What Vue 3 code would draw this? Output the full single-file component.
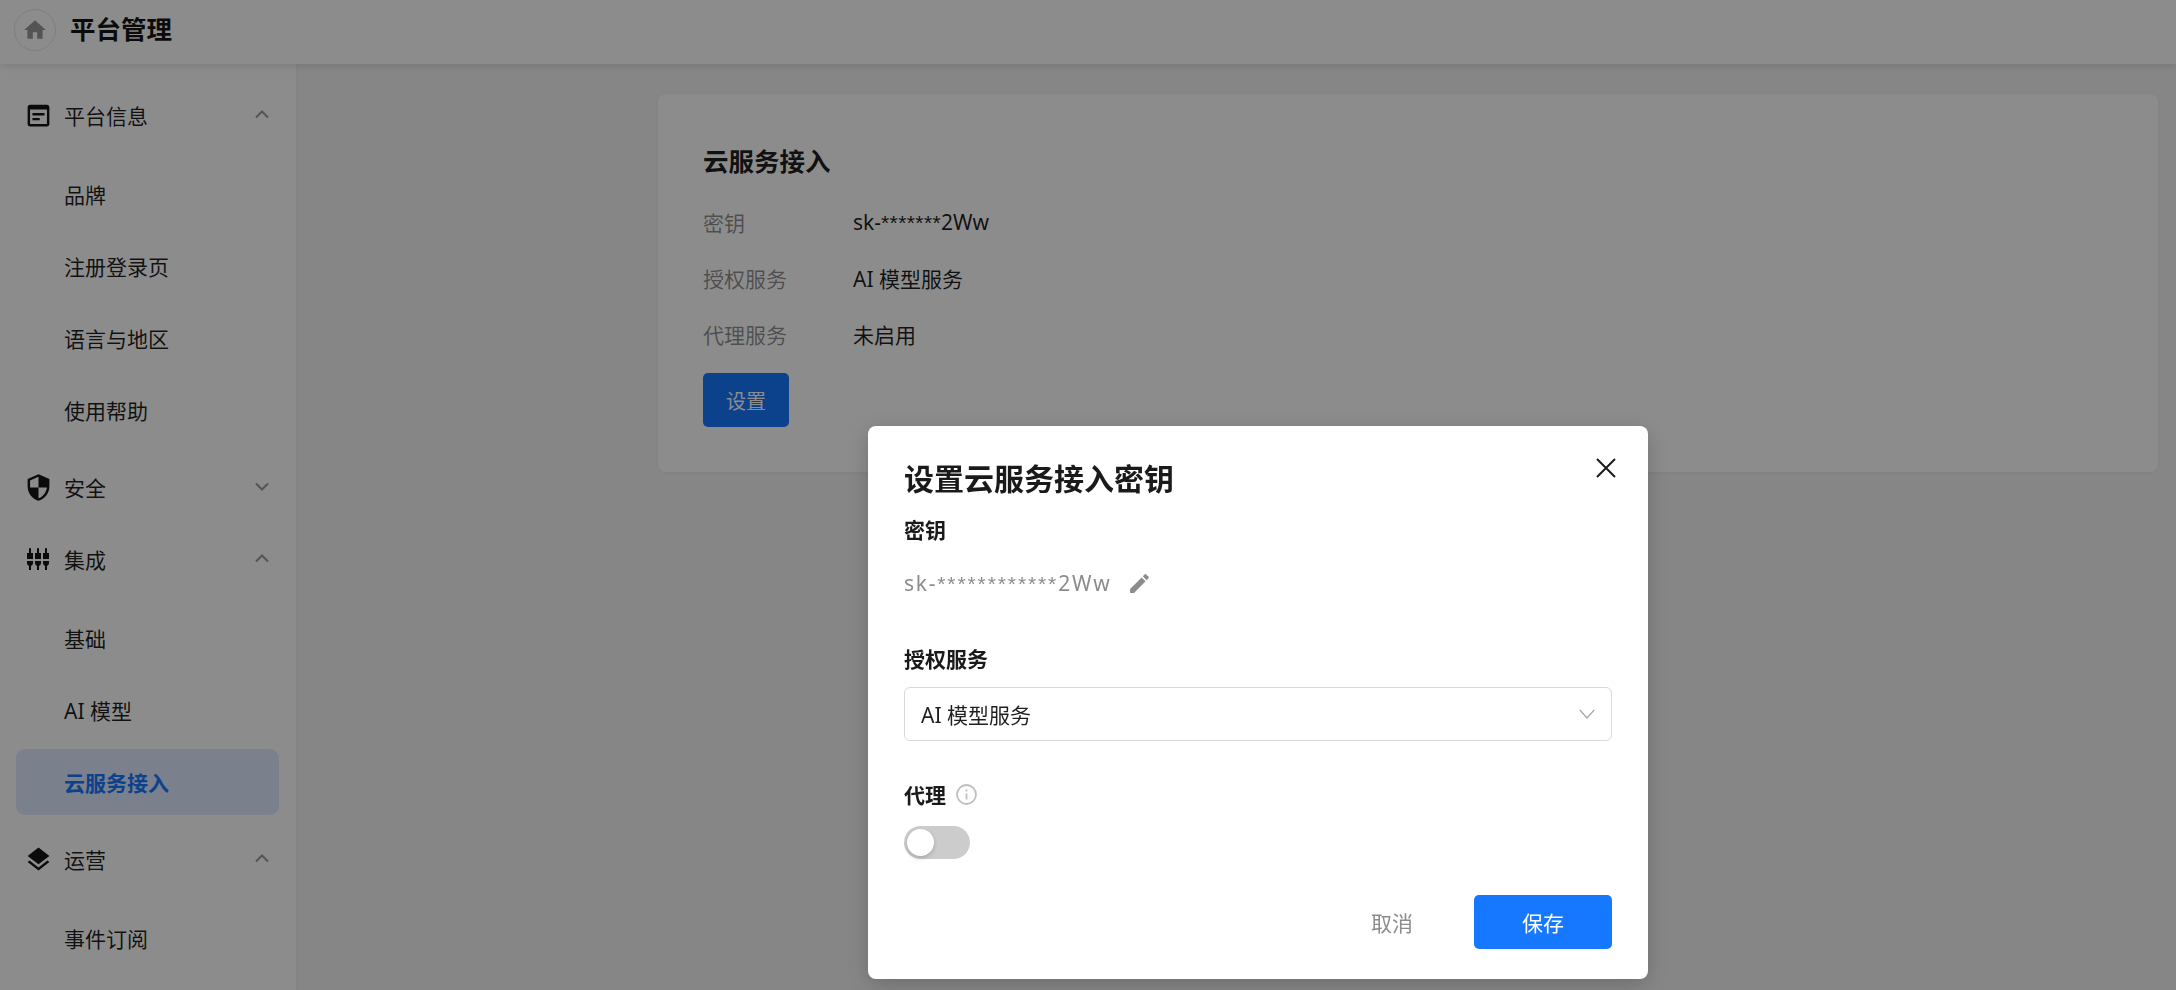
<script setup>
import { ref } from 'vue';

// Material glyphs used in the sidebar and dialog
const icons = {
  info: { size: 29, d: 'M19 3H5c-1.1 0-2 .9-2 2v14c0 1.1.9 2 2 2h14c1.1 0 2-.9 2-2V5c0-1.1-.9-2-2-2zm0 16H5V7h14v12zm-2-7H7v-2h10v2zm-4 4H7v-2h6v2z' },
  shield: { size: 29, d: 'M12 1 3 5v6c0 5.55 3.84 10.74 9 12 5.16-1.26 9-6.45 9-12V5l-9-4zm0 10.99h7c-.53 4.12-3.28 7.79-7 8.94V12H5V6.3l7-3.11v8.8z' },
  plugs: { size: 24, d: 'M5 2c0-.55-.45-1-1-1s-1 .45-1 1v4H1v6h6V6H5V2zm4 14c0 1.3.84 2.4 2 2.82V23h2v-4.18c1.16-.41 2-1.51 2-2.82v-2H9v2zm-8 0c0 1.3.84 2.4 2 2.82V23h2v-4.18C6.16 18.4 7 17.3 7 16v-2H1v2zM21 6V2c0-.55-.45-1-1-1s-1 .45-1 1v4h-2v6h6V6h-2zm-8-4c0-.55-.45-1-1-1s-1 .45-1 1v4H9v6h6V6h-2V2zm4 14c0 1.3.84 2.4 2 2.82V23h2v-4.18c1.16-.41 2-1.51 2-2.82v-2h-6v2z' },
  layers: { size: 29, d: 'M11.99 18.54l-7.37-5.73L3 14.07l9 7 9-7-1.63-1.27-7.38 5.74zM12 16l7.36-5.73L21 9l-9-7-9 7 1.63 1.27L12 16z' }
};

const menu = [
  { title: '平台信息', icon: 'info', open: true, items: ['品牌', '注册登录页', '语言与地区', '使用帮助'] },
  { title: '安全', icon: 'shield', open: false, items: [] },
  { title: '集成', icon: 'plugs', open: true, items: ['基础', 'AI 模型', '云服务接入'] },
  { title: '运营', icon: 'layers', open: true, items: ['事件订阅'] }
];

const activeItem = '云服务接入';

const dialogOpen = ref(true);
const proxyOn = ref(false);
</script>

<template>
  <div class="page">
    <header class="topbar">
      <span class="home">
        <svg viewBox="0 0 24 24" width="26" height="26"><path d="M10 20v-6h4v6h5v-8h3L12 3 2 12h3v8z" /></svg>
      </span>
      <span class="brand">平台管理</span>
    </header>

    <div class="body">
      <aside class="sidebar">
        <div v-for="group in menu" :key="group.title" class="group">
          <div class="row group-title">
            <span class="icon-box">
              <svg viewBox="0 0 24 24" :width="icons[group.icon].size" :height="icons[group.icon].size">
                <path :d="icons[group.icon].d" />
              </svg>
            </span>
            <span class="grow">{{ group.title }}</span>
            <svg class="arrow" :class="{ up: group.open }" viewBox="0 0 14 9" width="14" height="9">
              <path d="M1 1.5l6 6 6-6" />
            </svg>
          </div>
          <div v-if="group.items.length" class="sub">
            <div
              v-for="item in group.items"
              :key="item"
              class="row sub-item"
              :class="{ active: item === activeItem }"
            >{{ item }}</div>
          </div>
        </div>
      </aside>

      <main class="main">
        <section class="card">
          <h2 class="card-title">云服务接入</h2>
          <div class="line">
            <span class="line-label">密钥</span>
            <span>sk-<span class="stars">*******</span>2Ww</span>
          </div>
          <div class="line">
            <span class="line-label">授权服务</span>
            <span>AI 模型服务</span>
          </div>
          <div class="line">
            <span class="line-label">代理服务</span>
            <span>未启用</span>
          </div>
          <button class="btn primary small" type="button">设置</button>
        </section>
      </main>
    </div>

    <!-- Dialog layer -->
    <div v-if="dialogOpen" class="mask">
      <div class="dialog">
        <button class="close" type="button" @click="dialogOpen = false">
          <svg viewBox="0 0 20 20" width="20" height="20"><path d="M1 1l18 18M19 1L1 19" /></svg>
        </button>
        <h3 class="dialog-title">设置云服务接入密钥</h3>

        <div class="label key-label">密钥</div>
        <div class="key-value">
          <span>sk-<span class="stars">************</span>2Ww</span>
          <svg viewBox="0 0 24 24" width="25" height="25">
            <path d="M3 17.25V21h3.75L17.81 9.94l-3.75-3.75L3 17.25zM20.71 7.04c.39-.39.39-1.02 0-1.41l-2.34-2.34c-.39-.39-1.02-.39-1.41 0l-1.83 1.83 3.75 3.75 1.83-1.83z" />
          </svg>
        </div>

        <div class="label service-label">授权服务</div>
        <div class="select">
          <span>AI 模型服务</span>
          <svg viewBox="0 0 16 10" width="16" height="10"><path d="M.7.9L8 8.9 15.3.9" /></svg>
        </div>

        <div class="label proxy-label">
          代理
          <svg viewBox="0 0 21 21" width="21" height="21">
            <circle cx="10.5" cy="10.5" r="9.5" />
            <path d="M10.5 9.5v6M10.5 5.6v2" />
          </svg>
        </div>
        <button class="switch" :class="{ on: proxyOn }" type="button" @click="proxyOn = !proxyOn">
          <span class="knob"></span>
        </button>

        <div class="actions">
          <button class="btn plain" type="button" @click="dialogOpen = false">取消</button>
          <button class="btn primary" type="button">保存</button>
        </div>
      </div>
    </div>
  </div>
</template>

<style>
html, body { margin: 0; overflow: hidden; background: #fff; }
</style>

<style scoped>
.page {
  height: 990px;
  display: flex;
  flex-direction: column;
  overflow: hidden;
  font-family: "Noto Sans", "Noto Sans CJK SC", sans-serif;
  font-size: 21px;
  color: rgba(0, 0, 0, 0.88);
}

.topbar {
  height: 64px;
  flex: none;
  display: flex;
  align-items: center;
  padding-left: 14px;
  background: #fff;
  box-shadow: 0 2px 8px rgba(0, 0, 0, 0.12);
  position: relative;
  z-index: 1;
}
.home {
  width: 42px;
  height: 42px;
  margin-top: -4px;
  border: 1px solid #e7e7e7;
  border-radius: 50%;
  display: flex;
  align-items: center;
  justify-content: center;
  box-sizing: border-box;
}
.home svg { fill: #999; }
.brand {
  margin-left: 14px;
  margin-top: -10px;
  font-size: 25.5px;
  font-weight: 700;
  color: #141414;
}

.body { flex: 1; display: flex; min-height: 0; }

.sidebar {
  width: 298px;
  flex: none;
  box-sizing: border-box;
  padding: 18px 17px 0 16px;
  background: #fff;
  border-right: 2px solid #f0f0f0;
}
.group { margin-bottom: 6px; }
.row {
  height: 66px;
  display: flex;
  align-items: center;
  border-radius: 9px;
}
.group-title { padding-left: 11px; }
.icon-box {
  width: 22px;
  height: 22px;
  margin-right: 15px;
  flex: none;
  display: flex;
  align-items: center;
  justify-content: center;
}
.icon-box svg { flex: none; fill: #141414; }
.grow { flex: 1; }
.arrow {
  margin-right: 10px;
  margin-top: -2px;
  fill: none;
  stroke: #999;
  stroke-width: 2;
}
.arrow.up { transform: rotate(180deg); }
.sub {
  display: flex;
  flex-direction: column;
  gap: 6px;
  padding: 13px 0 5px;
}
.sub-item { padding-left: 48px; }
.sub-item.active {
  background: #deeaff;
  color: #1677ff;
  font-weight: 700;
}

.main {
  flex: 1;
  min-width: 0;
  background: #f5f5f5;
  padding: 30px 18px 0 360px;
}
.card {
  height: 378px;
  box-sizing: border-box;
  padding: 49px 45px 0;
  background: #fff;
  border-radius: 8px;
  box-shadow: 0 1px 4px rgba(0, 0, 0, 0.06);
}
.card-title {
  margin: 0 0 15px;
  font-size: 25.5px;
  font-weight: 700;
  line-height: 36px;
}
.line {
  height: 56px;
  display: flex;
  align-items: center;
}
.line-label { width: 150px; color: rgba(0, 0, 0, 0.45); }
.stars { font-family: "Liberation Sans", sans-serif; letter-spacing: 0.4px; }

.btn {
  height: 54px;
  border: 0;
  border-radius: 5px;
  font: inherit;
  padding: 0;
}
.btn.primary { width: 138px; background: #1677ff; color: #fff; }
.btn.primary.small { width: 86px; margin-top: 11px; font-size: 20px; }
.btn.plain { width: 140px; background: transparent; color: #8c8c8c; }

.mask {
  position: fixed;
  inset: 0;
  z-index: 10;
  background: rgba(0, 0, 0, 0.45);
  display: flex;
  align-items: flex-start;
  padding: 426px 0 0 868px;
  box-sizing: border-box;
}
.dialog {
  position: relative;
  width: 780px;
  height: 553px;
  box-sizing: border-box;
  padding: 31px 36px 0;
  background: #fff;
  border-radius: 8px;
  box-shadow: 0 6px 24px rgba(0, 0, 0, 0.2);
}
.close {
  position: absolute;
  top: 32px;
  right: 32px;
  width: 20px;
  height: 20px;
  padding: 0;
  border: 0;
  background: none;
  line-height: 0;
}
.close svg { fill: none; stroke: #1a1a1a; stroke-width: 2; }
.dialog-title {
  margin: 0;
  font-size: 30px;
  font-weight: 700;
  line-height: 44px;
  color: #1a1a1a;
}
.label {
  display: flex;
  align-items: center;
  height: 30px;
  font-weight: 700;
  color: #1a1a1a;
}
.key-label { margin-top: 13px; }
.key-value {
  margin-top: 24px;
  height: 30px;
  display: flex;
  align-items: center;
  gap: 16px;
  color: #8c8c8c;
  letter-spacing: 1.75px;
}
.key-value .stars { letter-spacing: 1.9px; }
.key-value svg { fill: #8c8c8c; flex: none; }
.service-label { margin-top: 45px; }
.select {
  margin-top: 14px;
  height: 54px;
  box-sizing: border-box;
  padding: 0 16px;
  display: flex;
  align-items: center;
  justify-content: space-between;
  border: 1px solid #d9d9d9;
  border-radius: 6px;
}
.select svg { fill: none; stroke: #a6a6a6; stroke-width: 1.4; }
.proxy-label { margin-top: 38px; gap: 10px; }
.proxy-label svg { fill: none; stroke: #bfbfbf; stroke-width: 1.8; }
.switch {
  display: block;
  margin-top: 17px;
  width: 66px;
  height: 33px;
  padding: 3px;
  border: 0;
  border-radius: 17px;
  background: #cccccc;
}
.switch.on { background: #1677ff; }
.knob {
  display: block;
  width: 27px;
  height: 27px;
  border-radius: 50%;
  background: #fff;
  box-shadow: 0 2px 4px rgba(0, 35, 11, 0.2);
}
.switch.on .knob { margin-left: 33px; }
.actions {
  position: absolute;
  right: 36px;
  bottom: 30px;
  display: flex;
  gap: 12px;
}
</style>
